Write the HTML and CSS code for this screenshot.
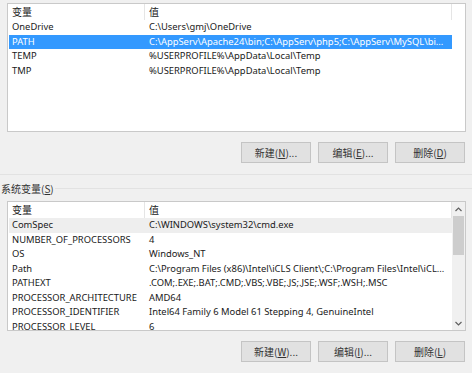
FILE: index.html
```html
<!DOCTYPE html>
<html lang="zh-CN">
<head>
    <meta charset="UTF-8">
    <meta name="viewport" content="width=device-width, initial-scale=1.0">
    <title>环境变量</title>
    <link rel="stylesheet" href="styles.css">
</head>
<body>
    <div class="dialog">
        <!-- 用户变量 -->
        <div class="list">
            <div class="list-body">
                <div class="list-head">
                    <span class="col-name">变量</span>
                    <span class="col-value">值</span>
                </div>
                <div class="list-row"><span class="col-name">OneDrive</span><span class="col-value">C:\Users\gmj\OneDrive</span></div>
                <div class="list-row selected"><span class="col-name">PATH</span><span class="col-value">C:\AppServ\Apache24\bin;C:\AppServ\php5;C:\AppServ\MySQL\bi...</span></div>
                <div class="list-row"><span class="col-name">TEMP</span><span class="col-value">%USERPROFILE%\AppData\Local\Temp</span></div>
                <div class="list-row"><span class="col-name">TMP</span><span class="col-value">%USERPROFILE%\AppData\Local\Temp</span></div>
            </div>
        </div>

        <div class="buttons">
            <button>新建(<u>N</u>)...</button>
            <button>编辑(<u>E</u>)...</button>
            <button>删除(<u>D</u>)</button>
        </div>

        <div class="separator"></div>

        <!-- 系统变量 -->
        <div class="group-title">
            <span>系统变量(<u>S</u>)</span>
            <div class="group-line"></div>
        </div>

        <div class="list list-system">
            <div class="list-body">
                <div class="list-head">
                    <span class="col-name">变量</span>
                    <span class="col-value">值</span>
                </div>
                <div class="list-row inactive"><span class="col-name">ComSpec</span><span class="col-value">C:\WINDOWS\system32\cmd.exe</span></div>
                <div class="list-row"><span class="col-name">NUMBER_OF_PROCESSORS</span><span class="col-value">4</span></div>
                <div class="list-row"><span class="col-name">OS</span><span class="col-value">Windows_NT</span></div>
                <div class="list-row"><span class="col-name">Path</span><span class="col-value">C:\Program Files (x86)\Intel\iCLS Client\;C:\Program Files\Intel\iCL...</span></div>
                <div class="list-row"><span class="col-name">PATHEXT</span><span class="col-value">.COM;.EXE;.BAT;.CMD;.VBS;.VBE;.JS;.JSE;.WSF;.WSH;.MSC</span></div>
                <div class="list-row"><span class="col-name">PROCESSOR_ARCHITECTURE</span><span class="col-value">AMD64</span></div>
                <div class="list-row"><span class="col-name">PROCESSOR_IDENTIFIER</span><span class="col-value">Intel64 Family 6 Model 61 Stepping 4, GenuineIntel</span></div>
                <div class="list-row"><span class="col-name">PROCESSOR_LEVEL</span><span class="col-value">6</span></div>
            </div>
            <div class="scrollbar">
                <div class="scroll-arrow">
                    <svg width="7" height="5" viewBox="0 0 7 5"><path d="M0.5 4 L3.5 1 L6.5 4" fill="none" stroke="#606060" stroke-width="1.2"/></svg>
                </div>
                <div class="scroll-track">
                    <div class="scroll-thumb"></div>
                </div>
                <div class="scroll-arrow">
                    <svg width="7" height="5" viewBox="0 0 7 5"><path d="M0.5 1 L3.5 4 L6.5 1" fill="none" stroke="#606060" stroke-width="1.2"/></svg>
                </div>
            </div>
        </div>

        <div class="buttons">
            <button>新建(<u>W</u>)...</button>
            <button>编辑(<u>I</u>)...</button>
            <button>删除(<u>L</u>)</button>
        </div>
    </div>
</body>
</html>
```

FILE: styles.css
```css
* {
    margin: 0;
    padding: 0;
    box-sizing: border-box;
}

body {
    font-family: "Noto Sans", "Noto Sans CJK SC", sans-serif;
    font-size: 9.4px;
    background-color: #f0f0f0;
    color: #1a1a1a;
    width: 472px;
    height: 373px;
    overflow: hidden;
}

.dialog {
    display: flex;
    flex-direction: column;
    padding-top: 3px;
}

/* List views */
.list {
    display: flex;
    margin: 0 6px 0 7px;
    height: 129px;
    background-color: #ffffff;
    border: 1px solid #c9c9c9;
    overflow: hidden;
}

.list-system {
    height: 130px;
    margin-top: 6px;
}

.list-body {
    flex: 1;
    padding-left: 1px;
    overflow: hidden;
}

.list-head,
.list-row {
    display: flex;
    width: 443px;
    white-space: nowrap;
}

.list-head {
    height: 16px;
    line-height: 16px;
    font-family: "Noto Sans CJK SC", sans-serif;
    font-size: 10px;
    color: #222;
}

.list-head .col-name,
.list-head .col-value {
    border-right: 1px solid #e5e5e5;
}

.list-row {
    height: 14.5px;
    line-height: 14.5px;
}

.col-name {
    width: 136px;
    padding-left: 3px;
    flex-shrink: 0;
    overflow: hidden;
}

.col-value {
    flex: 1;
    padding-left: 4px;
    overflow: hidden;
}

.list-row.selected {
    background-color: #3399ff;
    color: #ffffff;
}

.list-row.inactive {
    background-color: #eeeeee;
}

/* Scrollbar */
.scrollbar {
    width: 13px;
    display: flex;
    flex-direction: column;
    background-color: #f0f0f0;
}

.scroll-arrow {
    height: 14px;
    display: flex;
    align-items: center;
    justify-content: center;
}

.scroll-track {
    flex: 1;
    padding: 0 1px;
}

.scroll-thumb {
    height: 39px;
    background-color: #cdcdcd;
}

/* Buttons */
.buttons {
    display: flex;
    justify-content: flex-end;
    gap: 7px;
    margin-top: 10px;
    padding-right: 7px;
}

button {
    width: 70px;
    height: 21px;
    font-family: "Noto Sans CJK SC", sans-serif;
    font-size: 10px;
    color: #333;
    background-color: #e1e1e1;
    border: 1px solid #c4c4c4;
}

/* Group box */
.separator {
    height: 1px;
    margin-top: 11px;
    background-color: #e2e2e2;
}

.group-title {
    display: flex;
    align-items: center;
    height: 14px;
    margin-top: 6px;
    padding-left: 1px;
    font-family: "Noto Sans CJK SC", sans-serif;
    font-size: 10px;
    color: #333;
}

.group-line {
    flex: 1;
    height: 1px;
    margin-left: 1px;
    background-color: #e2e2e2;
}
```
